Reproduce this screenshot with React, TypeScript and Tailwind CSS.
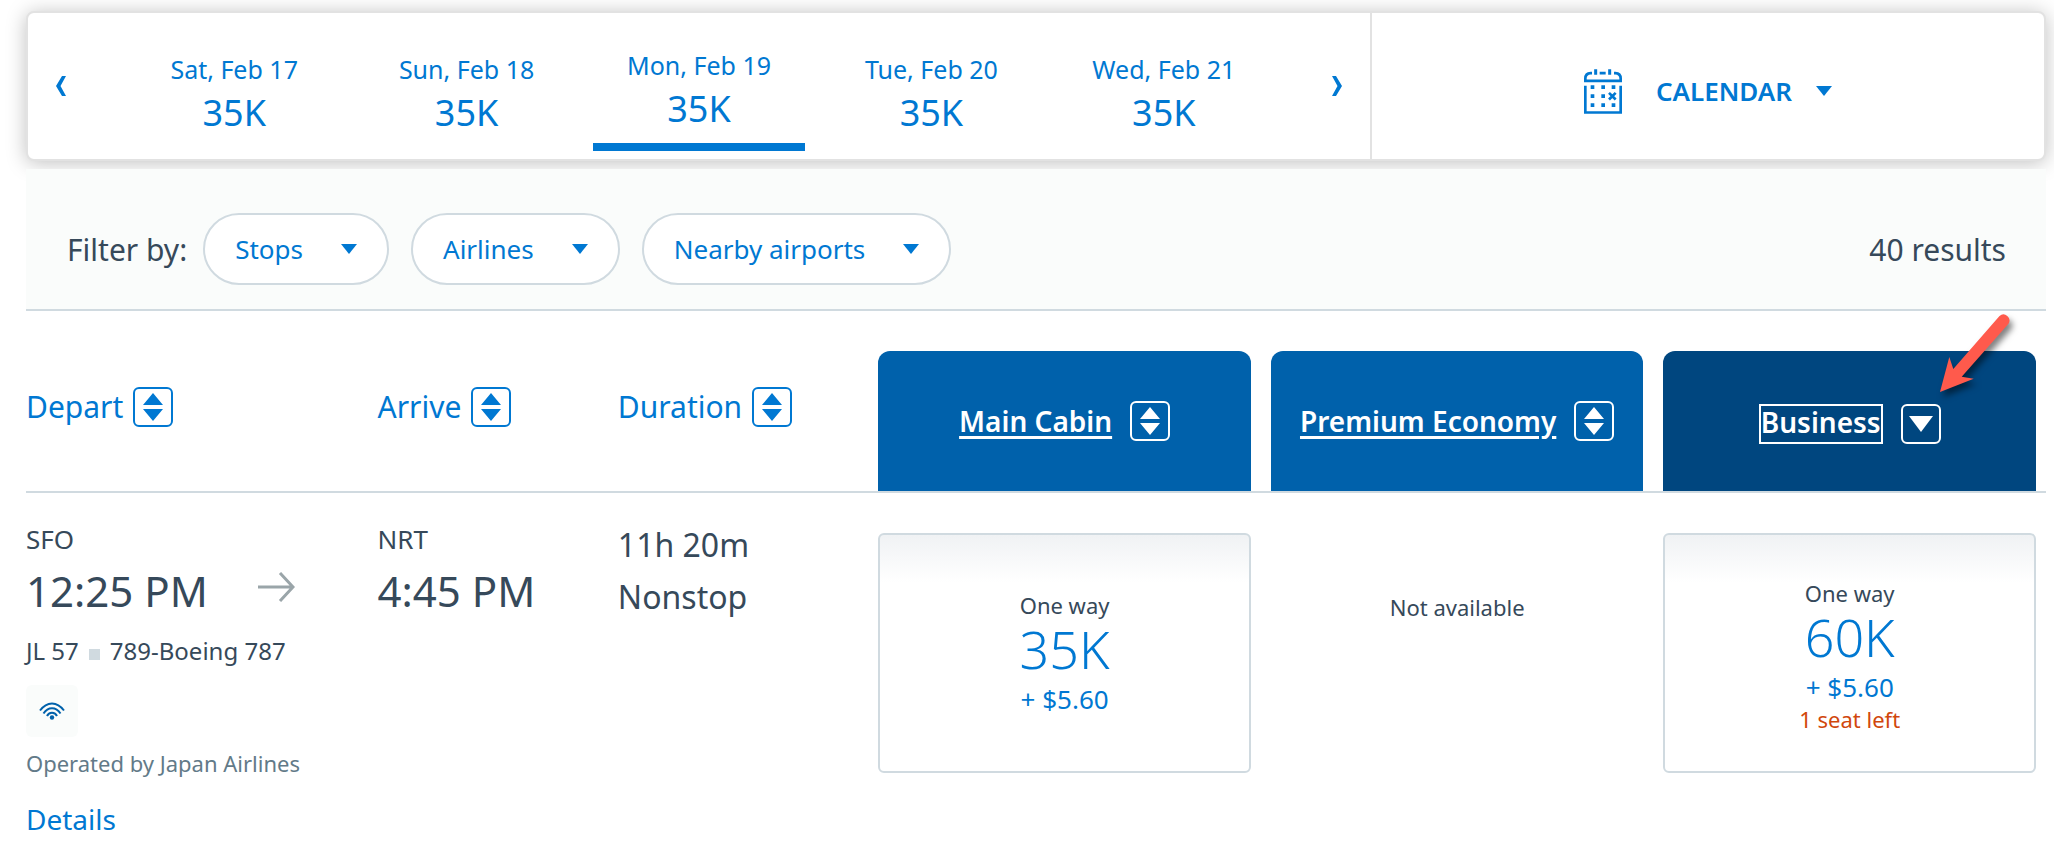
import { useState } from "react";
import clsx from "clsx";

const dates = [
  { day: "Sat, Feb 17", price: "35K" },
  { day: "Sun, Feb 18", price: "35K" },
  { day: "Mon, Feb 19", price: "35K" },
  { day: "Tue, Feb 20", price: "35K" },
  { day: "Wed, Feb 21", price: "35K" },
];

const filters = ["Stops", "Airlines", "Nearby airports"];

const cabins = ["Main Cabin", "Premium Economy", "Business"];

const flight = {
  from: "SFO",
  departs: "12:25 PM",
  to: "NRT",
  arrives: "4:45 PM",
  duration: "11h 20m",
  stops: "Nonstop",
  number: "JL 57",
  aircraft: "789-Boeing 787",
  operator: "Operated by Japan Airlines",
  fares: [
    { price: "35K", tax: "+ $5.60", note: "" },
    null,
    { price: "60K", tax: "+ $5.60", note: "1 seat left" },
  ],
};

function Caret() {
  return (
    <svg width="16" height="10" viewBox="0 0 16 10" fill="currentColor" aria-hidden="true">
      <path d="M0 0h16L8 10z" />
    </svg>
  );
}

function Chevron({ flip = false }: { flip?: boolean }) {
  return (
    <svg width="10" height="20" viewBox="0 0 10 20" fill="currentColor" aria-hidden="true" className={clsx(flip && "-scale-x-100")}>
      <path d="M6 0H10L4.500 10L10 20H6L0 10z" />
    </svg>
  );
}

function SortIcon({ active = false }: { active?: boolean }) {
  return (
    <svg width="40" height="40" viewBox="0 0 40 40" aria-hidden="true" className="shrink-0">
      <rect x="1" y="1" width="38" height="38" rx="5" fill="none" stroke="currentColor" strokeWidth="2" />
      {active ? (
        <path d="M8 12h24L20 28z" fill="currentColor" />
      ) : (
        <path d="M20 6l10 12H10zM20 34L10 22h20z" fill="currentColor" />
      )}
    </svg>
  );
}

function CalendarIcon() {
  return (
    <svg width="38" height="45" viewBox="0 0 114 134" fill="none" stroke="currentColor" strokeWidth="8" aria-hidden="true">
      <path d="M35 0v17M77 0v17" strokeWidth="9" />
      <path d="M24 12h-4Q4 13 4 28v7h106v-7Q110 13 94 12h-4M47 12h18" />
      <path d="M4 50v80h106V50" />
      <path d="M20 54h11M52 54h11M83 54h11M20 81h11M52 81h11M20 108h11M52 108h11M83 108h11" strokeWidth="11" />
      <path d="M75 71l20 20M95 71L75 91" strokeWidth="8" />
    </svg>
  );
}

function WifiIcon() {
  return (
    <svg width="26" height="18" viewBox="0 0 26 18" fill="none" stroke="currentColor" strokeWidth="2" aria-hidden="true">
      <path d="M1 8.500C8-1 18-1 25 8.500" />
      <path d="M4.500 11.500C9 4.500 17 4.500 21.500 11.500" />
      <path d="M8 14C10 9.500 16 9.500 18 14" />
      <circle cx="13" cy="15.500" r="2.200" fill="currentColor" stroke="none" />
    </svg>
  );
}

function PointerArrow() {
  return (
    <svg
      width="90"
      height="100"
      viewBox="0 0 90 100"
      aria-hidden="true"
      className="pointer-events-none absolute -top-10 right-4 drop-shadow-[3px_5px_3px_rgba(0,0,0,0.5)]"
    >
      <path d="M10 81L19.300 46L23.300 58L69.500 5A6 6 0 0 1 78.500 12.700L31.700 65.700L43.700 67.700z" fill="#ff5a4c" />
    </svg>
  );
}

export default function App() {
  const [selected, setSelected] = useState(2);
  const [sortBy, setSortBy] = useState("Business");

  return (
    <main className="bg-white pt-[11px] pr-2 pl-[26px] font-['Noto_Sans',sans-serif] text-[#36495a]">
      {/* Date picker */}
      <section className="flex rounded-lg border-2 border-[#e2e2e2] bg-white text-[#0078d2] shadow-[0_2px_20px_rgba(0,0,0,0.25)]">
        <div className="flex w-2/3 border-r-2 border-[#e2e2e2]">
          <button type="button" aria-label="Previous dates" className="flex w-[66px] shrink-0 items-center justify-center">
            <Chevron />
          </button>
          <div className="grid grow grid-cols-5 gap-5 px-[34px]">
            {dates.map((date, index) => (
              <button
                key={date.day}
                type="button"
                aria-pressed={selected === index}
                onClick={() => setSelected(index)}
                className={clsx(
                  "mb-2 flex flex-col items-center border-b-8 whitespace-nowrap",
                  selected === index ? "border-[#0078d2] pt-[34px] pb-2" : "border-transparent pt-[38px] pb-1"
                )}
              >
                <span className="text-[25px] leading-9">{date.day}</span>
                <span className="text-[36px] leading-[52px]">{date.price}</span>
              </button>
            ))}
          </div>
          <button type="button" aria-label="Next dates" className="flex w-[66px] shrink-0 items-center justify-center">
            <Chevron flip />
          </button>
        </div>
        <button type="button" className="flex grow items-center justify-center pt-2.5 text-[26px] font-semibold">
          <CalendarIcon />
          <span className="mr-6 ml-[34px]">CALENDAR</span>
          <Caret />
        </button>
      </section>

      {/* Filters */}
      <section className="mt-2 flex items-center border-b-2 border-[#d0dae0] bg-[#fafcfb] pt-11 pr-10 pb-6 pl-[41px]">
        <span className="mr-4 text-[30px]">Filter by:</span>
        <div className="flex gap-[22px]">
          {filters.map((filter) => (
            <button
              key={filter}
              type="button"
              aria-haspopup="true"
              className="flex h-[72px] items-center gap-[38px] rounded-full border-2 border-[#d0dae0] bg-white px-[30px] text-[26px] text-[#0078d2]"
            >
              {filter}
              <Caret />
            </button>
          ))}
        </div>
        <span className="ml-auto text-[30px]">40 results</span>
      </section>

      {/* Results */}
      <table className="w-full table-fixed border-collapse text-left">
        <colgroup>
          <col className="w-[17.4%]" />
          <col className="w-[11.9%]" />
          <col className="w-[12.4%]" />
          <col />
          <col />
          <col />
        </colgroup>
        <thead>
          <tr className="border-b-2 border-[#d0dae0]">
            {["Depart", "Arrive", "Duration"].map((label) => (
              <th key={label} scope="col" className="p-0 pt-[76px] align-top font-normal">
                <button type="button" onClick={() => setSortBy(label)} className="flex items-center gap-2.5 text-[30px] leading-10 text-[#0078d2]">
                  {label}
                  <SortIcon active={sortBy === label} />
                </button>
              </th>
            ))}
            {cabins.map((cabin) => {
              const active = sortBy === cabin;
              return (
                <th key={cabin} scope="col" className="px-2.5 pt-10 pb-0 font-semibold">
                  <div
                    className={clsx(
                      "relative flex h-[140px] items-center justify-center rounded-t-xl text-white",
                      active ? "bg-[#00467f] pt-1.5" : "bg-[#0061ab]"
                    )}
                  >
                    <button type="button" onClick={() => setSortBy(cabin)} className="flex items-center gap-[18px] text-[28px] leading-8 whitespace-nowrap">
                      <span className={active ? "border-2 border-white pb-1" : "underline decoration-[3px] underline-offset-4"}>{cabin}</span>
                      <SortIcon active={active} />
                    </button>
                    {active && <PointerArrow />}
                  </div>
                </th>
              );
            })}
          </tr>
        </thead>
        <tbody>
          <tr className="align-top">
            <td className="pt-[30px]">
              <p className="text-[26px] leading-8">{flight.from}</p>
              <div className="mt-2 flex items-center justify-between pr-[82px]">
                <p className="text-[42px] leading-14">{flight.departs}</p>
                <svg width="37" height="30" viewBox="0 0 37 30" fill="none" stroke="#9aa5a9" strokeWidth="3" aria-hidden="true" className="mb-2">
                  <path d="M0 15h35M22 1l13 14l-13 14" />
                </svg>
              </div>
              <p className="mt-4 flex items-center gap-2.5 text-[24px] leading-8 whitespace-nowrap">
                {flight.number}
                <span className="mt-1.5 size-[11px] bg-[#d0dae0]" />
                {flight.aircraft}
              </p>
              <div className="mt-[18px] flex size-[52px] items-center justify-center rounded-md bg-[#fafcfb] text-[#0061ab]">
                <WifiIcon />
              </div>
              <p className="mt-2.5 text-[22px] leading-8 whitespace-nowrap text-[#627a88]">{flight.operator}</p>
              <a href="#details" className="mt-[22px] inline-block text-[28px] leading-9 text-[#0078d2]">
                Details
              </a>
            </td>
            <td className="pt-[30px]">
              <p className="text-[26px] leading-8">{flight.to}</p>
              <p className="mt-2 text-[42px] leading-14">{flight.arrives}</p>
            </td>
            <td className="pt-[26px] text-[32px] leading-[52px]">
              <p>{flight.duration}</p>
              <p>{flight.stops}</p>
            </td>
            {flight.fares.map((fare, index) => (
              <td key={cabins[index]} className="px-2.5 pt-10 text-center">
                {fare ? (
                  <button
                    type="button"
                    className="flex h-60 w-full flex-col items-center justify-center rounded-md border-2 border-[#d0dae0] bg-linear-to-b from-[#f0f2f4] to-white to-20% pt-1 text-[#0078d2]"
                  >
                    <span className="text-[22px] leading-7 text-[#36495a]">One way</span>
                    <span className="text-[52px] leading-[60px] font-light">{fare.price}</span>
                    <span className="text-[26px] leading-10">{fare.tax}</span>
                    {fare.note && <span className="text-[22px] leading-6 text-[#d1470c]">{fare.note}</span>}
                  </button>
                ) : (
                  <p className="pt-[60px] text-[22px] leading-7">Not available</p>
                )}
              </td>
            ))}
          </tr>
        </tbody>
      </table>
    </main>
  );
}
